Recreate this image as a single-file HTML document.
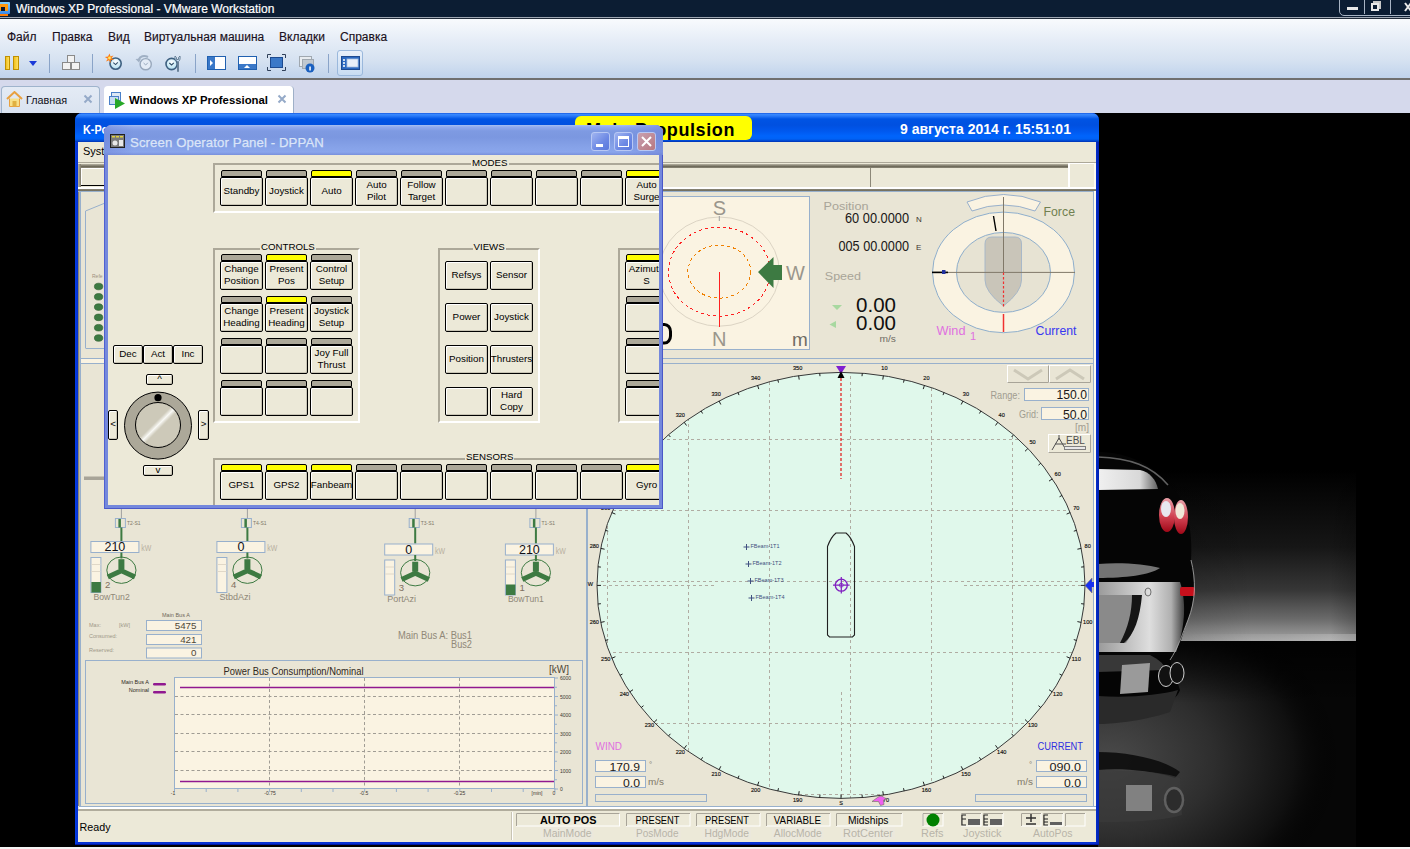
<!DOCTYPE html>
<html><head><meta charset="utf-8">
<style>
*{margin:0;padding:0;box-sizing:border-box}
html,body{width:1410px;height:849px;overflow:hidden;background:#000;font-family:"Liberation Sans",sans-serif}
.a{position:absolute}
#htitle{left:0;top:0;width:1410px;height:18px;background:#0c1d33;color:#fff;font-size:12px;line-height:17px;border-bottom:1px solid #b0b8c4}
#hmenu{left:0;top:18px;width:1410px;height:62px;background:linear-gradient(#c8d8f0 0,#f8fafd 1px,#f2f6fb 8px,#e6edf7 22px,#d6e2f1 42px,#c0d3ec 60px);border-bottom:2px solid #707070}
#htabs{left:0;top:80px;width:1410px;height:33px;background:#d5d9ec}
.mi{position:absolute;font-size:12px;color:#1a1020;-webkit-text-stroke:0.15px #1a1020}
.sep{position:absolute;top:53px;width:1px;height:19px;background:#8aa4c8}
#wall{left:1098px;top:113px;width:312px;height:736px;background:#000}
#gw{left:75px;top:113px;width:1024px;height:732px;background:linear-gradient(90deg,#0040e8,#0632d4 2px,#0632d4 1020px,#0020b0);border-radius:7px 7px 0 0;box-shadow:inset 0 -1px 0 #0018a0}
#gt{left:75px;top:113px;width:1024px;height:29px;border-radius:7px 7px 0 0;background:linear-gradient(#0a48d8 0,#3c8cff 1px,#2a7af8 3px,#0054e4 6px,#0050e0 12px,#0058ee 18px,#0064fc 23px,#0062f6 26px,#0044cc 28px,#0030b0 29px)}
#gc{left:78px;top:142px;width:1018px;height:700px;background:#ece9d8}
</style></head><body>
<div id="htitle" class="a">
  <svg class="a" style="left:0;top:0" width="12" height="17"><defs><linearGradient id="vmb" x1="0" y1="0" x2="0" y2="1"><stop offset="0" stop-color="#80d0ff"/><stop offset="1" stop-color="#3a88e8"/></linearGradient></defs><rect x="-1" y="2" width="11" height="12" rx="1" fill="url(#vmb)"/><rect x="-1" y="4" width="9" height="7" fill="#ff9a10"/><rect x="1" y="7" width="4" height="4" fill="#0a1830"/><rect x="-1" y="14" width="9" height="2" fill="#ff7a00"/></svg>
  <span class="a" style="left:16px;top:1px;-webkit-text-stroke:0.2px #fff">Windows XP Professional - VMware Workstation</span>
  <div class="a" style="left:1339px;top:-2px;width:80px;height:18px;border:1px solid #a8b4c4;border-radius:0 0 0 5px"></div>
  <div class="a" style="left:1364px;top:0;width:1px;height:14px;background:#a8b4c4"></div>
  <div class="a" style="left:1390px;top:0;width:1px;height:14px;background:#a8b4c4"></div>
  <div class="a" style="left:1347px;top:7px;width:11px;height:3px;background:#e8e8e8"></div>
  <div class="a" style="left:1373px;top:1px;width:8px;height:8px;border:2px solid #c8c8c8;border-left:none;border-bottom:none"></div><div class="a" style="left:1371px;top:3px;width:8px;height:8px;border:2px solid #e8e8e8;background:#0c1d33"></div>
  <svg class="a" style="left:1400px;top:2px" width="10" height="10"><path d="M5 1 L11 9 M11 1 L5 9" stroke="#e8e8e8" stroke-width="2"/></svg>
</div>
<div id="hmenu" class="a">
  <span class="mi" style="left:7px;top:12px">Файл</span>
  <span class="mi" style="left:52px;top:12px">Правка</span>
  <span class="mi" style="left:108px;top:12px">Вид</span>
  <span class="mi" style="left:144px;top:12px">Виртуальная машина</span>
  <span class="mi" style="left:279px;top:12px">Вкладки</span>
  <span class="mi" style="left:340px;top:12px">Справка</span>
  <!-- toolbar -->
  <div class="a" style="left:5px;top:38px;width:5px;height:14px;background:linear-gradient(90deg,#f0c020,#ffe060);border:1px solid #c09000"></div>
  <div class="a" style="left:13px;top:38px;width:6px;height:14px;background:linear-gradient(90deg,#f0c020,#ffe060);border:1px solid #c09000"></div>
  <div class="a" style="left:29px;top:43px;width:0;height:0;border-left:4px solid transparent;border-right:4px solid transparent;border-top:5px solid #1a3ad8"></div>
  <div class="sep" style="left:49px;top:36px"></div>
  <svg class="a" style="left:61px;top:36px" width="20" height="17"><rect x="6.5" y="1.5" width="7" height="7" fill="#f2f2f2" stroke="#8a8a8a"/><rect x="1.5" y="8.5" width="8" height="7" fill="#f2f2f2" stroke="#8a8a8a"/><rect x="10.5" y="8.5" width="8" height="7" fill="#f2f2f2" stroke="#8a8a8a"/></svg>
  <div class="sep" style="left:92px;top:36px"></div>
  <svg class="a" style="left:104px;top:35px" width="22" height="20"><defs><radialGradient id="clk" cx="0.5" cy="0.35" r="0.7"><stop offset="0" stop-color="#ffffff"/><stop offset="1" stop-color="#a8dcf0"/></radialGradient></defs><circle cx="11.6" cy="10.6" r="5.6" fill="url(#clk)" stroke="#3e6080" stroke-width="1.6"/><path d="M9.3 9.6 L11.6 11.6 L13.8 9.4" stroke="#30506a" stroke-width="1.1" fill="none"/><path d="M5.5 0.5 L6.5 3.5 L9.5 2.5 L7.5 5 L10 7 L6.8 6.8 L6.5 10 L5 7.2 L2 8.5 L3.8 5.8 L0.8 4 L4 3.6 Z" fill="#ff7a10"/><circle cx="5.5" cy="5" r="1.4" fill="#ffe860"/></svg>
  <svg class="a" style="left:134px;top:35px" width="22" height="20"><circle cx="11.7" cy="11.2" r="5.6" fill="#e4ecf6" stroke="#98a8bc" stroke-width="1.4"/><path d="M9.6 10 L11.7 12 L13.8 9.8" stroke="#98a8bc" stroke-width="1" fill="none"/><path d="M14 4 C10 2 6 3 4.5 7" stroke="#a0b0c4" stroke-width="2" fill="none"/><path d="M1.5 6 L5 9.5 L7 5.5 Z" fill="#a0b0c4"/></svg>
  <svg class="a" style="left:164px;top:35px" width="22" height="20"><circle cx="7.6" cy="11" r="5.6" fill="url(#clk)" stroke="#3e6080" stroke-width="1.6"/><path d="M5.3 10 L7.6 12 L9.8 9.8" stroke="#30506a" stroke-width="1.1" fill="none"/><path d="M13.5 18.5 L13.5 8.5 C11.5 8 10.5 6 11 3 L12.5 4.5 L12.5 6.5 L14.5 6.5 L14.5 4.5 L16 3 C16.5 6 15.5 8 14.5 8.5 L14.5 18.5 Z" fill="#c8e0f4" stroke="#607890" stroke-width="0.9"/></svg>
  <div class="sep" style="left:195px;top:36px"></div>
  <svg class="a" style="left:207px;top:38px" width="20" height="15"><rect x="0.5" y="0.5" width="18" height="13" fill="#fff" stroke="#2060b0"/><rect x="1" y="1" width="7" height="12" fill="#3a78c8"/><path d="M3 4 L6 7 L3 10 Z" fill="#fff"/></svg>
  <svg class="a" style="left:238px;top:38px" width="20" height="15"><rect x="0.5" y="0.5" width="18" height="13" fill="#fff" stroke="#2060b0"/><rect x="1" y="8" width="17" height="5" fill="#3a78c8"/><path d="M6 12 L9 9 L12 12 Z" fill="#fff"/></svg>
  <svg class="a" style="left:267px;top:36px" width="20" height="18"><rect x="3.5" y="3.5" width="12" height="10" fill="#3a78c8" stroke="#1c4a90"/><path d="M0.5 4 V0.5 H4 M15 0.5 H18.5 V4 M18.5 13 V16.5 H15 M4 16.5 H0.5 V13" stroke="#30405a" fill="none"/></svg>
  <svg class="a" style="left:298px;top:37px" width="20" height="18"><rect x="1.5" y="1.5" width="12" height="10" fill="#e8ecf0" stroke="#a0a8b0"/><rect x="4.5" y="4.5" width="11" height="9" fill="#c0c8d0" stroke="#a0a8b0"/><circle cx="12" cy="13" r="4.5" fill="#1a60c0"/><rect x="11.3" y="11.5" width="1.5" height="4" fill="#fff"/></svg>
  <div class="sep" style="left:328px;top:36px"></div>
  <div class="a" style="left:337px;top:32px;width:26px;height:26px;border:1px solid #9ab8dc;border-radius:3px;background:linear-gradient(#e8f0fa,#c8dcf2)"></div>
  <svg class="a" style="left:341px;top:38px" width="20" height="15"><rect x="0.5" y="0.5" width="18" height="13" fill="#2a68c0" stroke="#1c4a90"/><rect x="6" y="3" width="11" height="8" fill="#e8f0fa" stroke="#a8c0e0" stroke-width="0.8"/><rect x="2" y="3" width="2" height="2" fill="#cde"/><rect x="2" y="6" width="2" height="2" fill="#cde"/><rect x="2" y="9" width="2" height="2" fill="#cde"/></svg>
</div>
<div class="a" style="left:0;top:17px;width:1410px;height:1px;background:#a0a8b4"></div><div class="a" style="left:0;top:18px;width:1410px;height:1px;background:#202a38"></div>
<div id="htabs" class="a">
  <div class="a" style="left:1px;top:6px;width:99px;height:27px;background:linear-gradient(#e4ebf5,#dae3f0);border:1px solid #9fb4cc;border-bottom:none;border-radius:4px 4px 0 0"></div>
  <svg class="a" style="left:6px;top:11px" width="17" height="17"><path d="M1 8 L8.5 1 L16 8" stroke="#e8a040" stroke-width="2" fill="none"/><path d="M3.5 7.5 V15.5 H13.5 V7.5" fill="#f8e088" stroke="#e8a040"/><rect x="6.5" y="10" width="4" height="5.5" fill="#e0b040"/></svg>
  <div class="a" style="left:104px;top:6px;width:190px;height:27px;background:#fff;border-radius:4px 4px 0 0;border-right:1px solid #9fb0c8"></div>
  <svg class="a" style="left:109px;top:12px" width="17" height="17"><rect x="2.5" y="0.5" width="9" height="8" fill="#dde8f4" stroke="#4a80c8"/><rect x="0.5" y="4.5" width="9" height="8" fill="#c8dcf0" stroke="#4a80c8"/><path d="M6 6 L16 11.5 L6 17 Z" fill="#28a828"/></svg>
  <svg class="a" style="left:0;top:0" width="300" height="33" font-family="Liberation Sans">
    <text x="26" y="23.5" font-size="11.5" fill="#101018" textLength="41.2" lengthAdjust="spacingAndGlyphs">Главная</text>
    <path d="M84.5 15.5 L91.5 22.5 M91.5 15.5 L84.5 22.5" stroke="#95aac8" stroke-width="2"/>
    <text x="129" y="23.5" font-size="11.8" font-weight="bold" fill="#000" textLength="139" lengthAdjust="spacingAndGlyphs">Windows XP Professional</text>
    <path d="M278.5 15.5 L285.5 22.5 M285.5 15.5 L278.5 22.5" stroke="#95aac8" stroke-width="2"/>
  </svg>
</div>
<div id="wall" class="a">
<svg width="312" height="736" viewBox="1098 113 312 736" style="position:absolute;left:0;top:0">
 <defs>
  <linearGradient id="glowU" gradientUnits="userSpaceOnUse" x1="0" y1="470" x2="0" y2="641">
   <stop offset="0" stop-color="#000"/><stop offset="0.45" stop-color="#161616"/><stop offset="0.7" stop-color="#363636"/><stop offset="0.87" stop-color="#6a6a6a"/><stop offset="1" stop-color="#a4a4a4"/>
  </linearGradient>
  <linearGradient id="glowUx" gradientUnits="userSpaceOnUse" x1="1098" y1="0" x2="1356" y2="0">
   <stop offset="0" stop-color="#000" stop-opacity="0.25"/><stop offset="0.6" stop-color="#000" stop-opacity="0"/><stop offset="0.9" stop-color="#000" stop-opacity="0"/><stop offset="1" stop-color="#000" stop-opacity="0.2"/>
  </linearGradient>
  <radialGradient id="glowD" gradientUnits="userSpaceOnUse" cx="1110" cy="760" r="1" gradientTransform="translate(1110 760) scale(230 170) translate(-1110 -760)">
   <stop offset="0" stop-color="#4a4a4a"/><stop offset="0.45" stop-color="#2e2e2e"/><stop offset="0.8" stop-color="#101010"/><stop offset="1" stop-color="#000" stop-opacity="0"/>
  </radialGradient>
  <linearGradient id="horD" x1="0" x2="0" y1="641" y2="703" gradientUnits="userSpaceOnUse"><stop offset="0" stop-color="#000" stop-opacity="0.8"/><stop offset="1" stop-color="#000" stop-opacity="0"/></linearGradient>
  <linearGradient id="streak" x1="1180" x2="1356" y1="0" y2="0" gradientUnits="userSpaceOnUse">
   <stop offset="0" stop-color="#fff" stop-opacity="0"/><stop offset="0.6" stop-color="#fff" stop-opacity="0.35"/><stop offset="1" stop-color="#fff" stop-opacity="0.8"/>
  </linearGradient>
  <linearGradient id="bump" x1="0" x2="1" y1="0" y2="0">
   <stop offset="0" stop-color="#9a9a9a"/><stop offset="0.6" stop-color="#dedede"/><stop offset="0.85" stop-color="#b0b0b0"/><stop offset="1" stop-color="#404040"/>
  </linearGradient>
  <linearGradient id="win" x1="0" x2="1" y1="0" y2="0">
   <stop offset="0" stop-color="#f0f0f0"/><stop offset="0.7" stop-color="#d8d8d8"/><stop offset="1" stop-color="#606060"/>
  </linearGradient>
  <linearGradient id="tl" x1="0" x2="0" y1="0" y2="1">
   <stop offset="0" stop-color="#e8a0a8"/><stop offset="0.55" stop-color="#d04050"/><stop offset="1" stop-color="#a00818"/>
  </linearGradient>
 </defs>
 <rect x="1098" y="113" width="258" height="528" fill="url(#glowU)"/><rect x="1098" y="450" width="258" height="191" fill="url(#glowUx)"/>
 <rect x="1098" y="641" width="258" height="208" fill="#060606"/>
 <rect x="1098" y="641" width="258" height="208" fill="url(#glowD)"/><rect x="1098" y="641" width="258" height="62" fill="url(#horD)"/>
 <rect x="1190" y="634" width="166" height="7" fill="url(#streak)" opacity="0.3"/>
 <!-- car body -->
 <path d="M1098 452 C1125 452 1150 462 1170 485 C1185 500 1193 525 1191 560 C1195 575 1196 600 1188 620 C1182 635 1180 650 1170 660 L1180 690 C1175 705 1150 712 1098 715 Z" fill="#050505"/>
 <path d="M1098 457 C1130 458 1152 466 1168 485" fill="none" stroke="#8a8a8a" stroke-width="1.5" opacity="0.7"/>
 <path d="M1098 469 L1140 470 C1150 472 1156 480 1158 489 L1098 490 Z" fill="url(#win)"/>
 <path d="M1098 564 C1120 562 1145 564 1160 568 C1150 575 1125 578 1098 578 Z" fill="#909090" opacity="0.8"/>
 <path d="M1098 582 L1180 582 C1186 600 1186 625 1176 652 L1098 652 Z" fill="url(#bump)"/>
 <path d="M1098 595 L1140 595 C1138 615 1134 632 1126 643 L1098 643 Z" fill="#8a8a8a"/>
 <path d="M1132 595 L1142 595 C1140 618 1134 635 1124 643 L1120 643 C1128 628 1132 612 1132 595 Z" fill="#151515"/>
 <ellipse cx="1148" cy="592" rx="3" ry="4" fill="none" stroke="#707070"/>
 <rect x="1180" y="587" width="15" height="9" rx="2" fill="#c8101c"/>
 <path d="M1191 560 C1196 580 1196 600 1188 620 C1182 635 1178 648 1170 660" fill="none" stroke="#b0b0b0" stroke-width="0.8"/>
 <ellipse cx="1167" cy="515" rx="8" ry="17" fill="url(#tl)"/>
 <ellipse cx="1166" cy="509" rx="5" ry="8" fill="#e8e8f0"/>
 <ellipse cx="1181" cy="517" rx="7" ry="17" fill="url(#tl)"/>
 <ellipse cx="1180" cy="511" rx="4.5" ry="8" fill="#f0e8d8"/>
 <path d="M1098 655 L1150 655 C1160 660 1165 665 1165 670 L1098 672 Z" fill="#383838"/>
 <path d="M1122 665 L1150 663 L1148 692 L1120 694 Z" fill="#9a9a9a"/>
 <path d="M1098 696 C1130 698 1160 695 1178 690 L1170 712 C1140 722 1110 724 1098 724 Z" fill="#2a2a2a"/>
 <ellipse cx="1166" cy="676" rx="7.5" ry="10.5" fill="#111" stroke="#d0d0d0" stroke-width="1"/>
 <ellipse cx="1177" cy="673" rx="7" ry="10.5" fill="#111" stroke="#d0d0d0" stroke-width="1"/>
 <!-- reflection -->
 <path d="M1098 752 C1130 752 1165 760 1180 772 L1175 778 C1150 770 1120 768 1098 770 Z" fill="#0c0c0c" opacity="0.9"/>
 <path d="M1098 770 C1130 770 1165 772 1180 778 L1182 815 C1160 822 1120 822 1098 822 Z" fill="#3a3a3a" opacity="0.7"/>
 <rect x="1126" y="785" width="26" height="26" fill="#9a9a9a" opacity="0.75"/>
 <ellipse cx="1174" cy="800" rx="9" ry="12" fill="#2a2a2a" stroke="#6a6a6a" stroke-width="2.5" opacity="0.8"/>
</svg>
</div>
<div id="gw" class="a"></div>
<div id="gt" class="a">
  <span class="a" style="left:8px;top:9px;font-size:13.5px;font-weight:bold;color:#fff;transform:scaleX(0.8);transform-origin:0 0;word-spacing:4px">K-Pos OS Operator Title Station 00</span>
  <div class="a" style="left:500px;top:3px;width:177px;height:24px;background:#ffff00;border-radius:6px"></div>
  <span class="a" style="left:511px;top:7px;font-size:18px;letter-spacing:0.6px;font-weight:bold;color:#000">Main Propulsion</span>
  <span class="a" style="left:825px;top:8px;font-size:14px;font-weight:bold;color:#fff">9 августа 2014 г. 15:51:01</span>
</div>
<div id="gc" class="a">
  <span class="a" style="left:5px;top:3px;font-size:11px;color:#000">System</span>
  <div class="a" style="left:0;top:20px;width:1018px;height:1px;background:#aca899"></div>
  <div class="a" style="left:0;top:22px;width:991px;height:4px;background:linear-gradient(#b8b4a4,#6e6a5a 60%,#8c8878)"></div>
  <div class="a" style="left:0;top:22px;width:3px;height:24px;background:linear-gradient(90deg,#b8b4a4,#7e7a6a)"></div>
  <div class="a" style="left:3px;top:26px;width:30px;height:1px;background:#fff"></div>
  <div class="a" style="left:3px;top:26px;width:1px;height:17px;background:#fff"></div>
  <div class="a" style="left:3px;top:43px;width:30px;height:1px;background:#000"></div>
  <div class="a" style="left:990px;top:21px;width:2px;height:25px;background:#fff"></div>
  <div class="a" style="left:992px;top:21px;width:26px;height:1px;background:#fff"></div>
  <div class="a" style="left:1016px;top:21px;width:2px;height:679px;background:#fdfaf0"></div>
  <div class="a" style="left:792px;top:26px;width:1px;height:20px;background:#8c8878"></div>
  <div class="a" style="left:0;top:45px;width:1018px;height:2px;background:#fff"></div>
  <div class="a" style="left:0;top:47px;width:1018px;height:2px;background:linear-gradient(#8c8878,#6e6a5a)"></div>
  <div class="a" style="left:0;top:49px;width:1016px;height:651px;background:#e9e5d5;border-top:1px solid #98b0cc"></div>
</div>
<svg class="a" style="left:0;top:0" width="1410" height="849" font-family="Liberation Sans"><rect x="78" y="192" width="1.5" height="614" fill="#8a8676"/><rect x="80" y="192" width="1" height="615" fill="#98b0cc"/><rect x="586" y="192" width="2" height="615" fill="#98b0cc"/><rect x="1093" y="192" width="1" height="615" fill="#98b0cc"/><rect x="588" y="358" width="505" height="1" fill="#98b0cc"/><rect x="588" y="363" width="505" height="1" fill="#98b0cc"/><rect x="79" y="806" width="1017" height="1" fill="#98b0cc"/><rect x="79" y="807" width="1017" height="2" fill="#fff"/><path d="M85.5 348 V211 L110 201" fill="none" stroke="#98b0cc"/><path d="M85.5 348.5 H110" fill="none" stroke="#98b0cc"/><rect x="80.5" y="358.5" width="30" height="5" fill="#faf3e2" stroke="#98b0cc"/><text x="92" y="278" font-size="5" fill="#a09080">Refe</text><ellipse cx="98.6" cy="286.5" rx="4.2" ry="3.3" fill="#3d7a42" stroke="#2a5a2a" stroke-width="0.6"/><ellipse cx="98.6" cy="296.8" rx="4.2" ry="3.3" fill="#3d7a42" stroke="#2a5a2a" stroke-width="0.6"/><ellipse cx="98.6" cy="307.1" rx="4.2" ry="3.3" fill="#3d7a42" stroke="#2a5a2a" stroke-width="0.6"/><ellipse cx="98.6" cy="317.4" rx="4.2" ry="3.3" fill="#3d7a42" stroke="#2a5a2a" stroke-width="0.6"/><ellipse cx="98.6" cy="327.7" rx="4.2" ry="3.3" fill="#3d7a42" stroke="#2a5a2a" stroke-width="0.6"/><ellipse cx="98.6" cy="338.0" rx="4.2" ry="3.3" fill="#3d7a42" stroke="#2a5a2a" stroke-width="0.6"/><rect x="84" y="476.5" width="22" height="3.5" fill="#a8a498"/><rect x="120.9" y="505" width="1" height="13" fill="#a0a0a0"/><rect x="115.4" y="518.5" width="10" height="9" fill="none" stroke="#98b0cc"/><rect x="118.4" y="519" width="2.5" height="8.5" fill="#3d7a42"/><text x="126.9" y="525" font-size="5" fill="#807868">T2-S1</text><rect x="120.4" y="527.5" width="2" height="13.5" fill="#3d7a42"/><rect x="90.9" y="541.5" width="48" height="11" fill="#faf3e2" stroke="#98b0cc"/><text x="114.9" y="551.3" font-size="12.5" text-anchor="middle" fill="#101018">210</text><text x="141.2" y="551" font-size="8.5" fill="#b8b0a0" textLength="10" lengthAdjust="spacingAndGlyphs" >kW</text><rect x="120.4" y="552.5" width="2" height="6" fill="#3d7a42"/><ellipse cx="121.4" cy="570.2" rx="14.6" ry="13.2" fill="none" stroke="#3d7a42" stroke-width="1"/><rect x="118.4" y="559.2" width="6" height="10" fill="#3d7a42"/><path d="M107.8 576.9 L121.4 570.7 L135 576.9" fill="none" stroke="#3d7a42" stroke-width="5"/><rect x="90.9" y="557.5" width="10" height="35" fill="#faf3e2" stroke="#98b0cc"/><line x1="91.4" y1="564.5" x2="100.4" y2="564.5" stroke="#e0d8c8"/><line x1="91.4" y1="571.5" x2="100.4" y2="571.5" stroke="#e0d8c8"/><rect x="91.4" y="582" width="9.5" height="10.5" fill="#3d7a42"/><text x="104.9" y="588" font-size="9.6" fill="#807060">2</text><text x="93.4" y="599.5" font-size="9.6" fill="#908878" textLength="36.4" lengthAdjust="spacingAndGlyphs" >BowTun2</text><rect x="246.9" y="505" width="1" height="13" fill="#a0a0a0"/><rect x="241.4" y="518.5" width="10" height="9" fill="none" stroke="#98b0cc"/><rect x="244.4" y="519" width="2.5" height="8.5" fill="#3d7a42"/><text x="252.9" y="525" font-size="5" fill="#807868">T4-S1</text><rect x="246.4" y="527.5" width="2" height="13.5" fill="#3d7a42"/><rect x="216.9" y="541.5" width="48" height="11" fill="#faf3e2" stroke="#98b0cc"/><text x="240.9" y="551.3" font-size="12.5" text-anchor="middle" fill="#101018">0</text><text x="267.2" y="551" font-size="8.5" fill="#b8b0a0" textLength="10" lengthAdjust="spacingAndGlyphs" >kW</text><rect x="246.4" y="552.5" width="2" height="6" fill="#3d7a42"/><ellipse cx="247.4" cy="570.2" rx="14.6" ry="13.2" fill="none" stroke="#3d7a42" stroke-width="1"/><rect x="244.4" y="559.2" width="6" height="10" fill="#3d7a42"/><path d="M233.8 576.9 L247.4 570.7 L261 576.9" fill="none" stroke="#3d7a42" stroke-width="5"/><rect x="216.9" y="557.5" width="10" height="35" fill="#faf3e2" stroke="#98b0cc"/><line x1="217.4" y1="564.5" x2="226.4" y2="564.5" stroke="#e0d8c8"/><line x1="217.4" y1="571.5" x2="226.4" y2="571.5" stroke="#e0d8c8"/><text x="230.9" y="588" font-size="9.6" fill="#807060">4</text><text x="219.4" y="599.5" font-size="9.6" fill="#908878" textLength="31.1" lengthAdjust="spacingAndGlyphs" >StbdAzi</text><rect x="414.7" y="505" width="1" height="13" fill="#a0a0a0"/><rect x="409.2" y="518.5" width="10" height="9" fill="none" stroke="#98b0cc"/><rect x="412.2" y="519" width="2.5" height="8.5" fill="#3d7a42"/><text x="420.7" y="525" font-size="5" fill="#807868">T3-S1</text><rect x="414.2" y="527.5" width="2" height="16.0" fill="#3d7a42"/><rect x="384.7" y="544.0" width="48" height="11" fill="#faf3e2" stroke="#98b0cc"/><text x="408.7" y="553.8" font-size="12.5" text-anchor="middle" fill="#101018">0</text><text x="435" y="553.5" font-size="8.5" fill="#b8b0a0" textLength="10" lengthAdjust="spacingAndGlyphs" >kW</text><rect x="414.2" y="555.0" width="2" height="6" fill="#3d7a42"/><ellipse cx="415.2" cy="572.7" rx="14.6" ry="13.2" fill="none" stroke="#3d7a42" stroke-width="1"/><rect x="412.2" y="561.7" width="6" height="10" fill="#3d7a42"/><path d="M401.6 579.4 L415.2 573.2 L428.8 579.4" fill="none" stroke="#3d7a42" stroke-width="5"/><rect x="384.7" y="560.0" width="10" height="35" fill="#faf3e2" stroke="#98b0cc"/><line x1="385.2" y1="567.0" x2="394.2" y2="567.0" stroke="#e0d8c8"/><line x1="385.2" y1="574.0" x2="394.2" y2="574.0" stroke="#e0d8c8"/><text x="398.7" y="590.5" font-size="9.6" fill="#807060">3</text><text x="387.2" y="602" font-size="9.6" fill="#908878" textLength="28.9" lengthAdjust="spacingAndGlyphs" >PortAzi</text><rect x="535.4" y="505" width="1" height="13" fill="#a0a0a0"/><rect x="529.9" y="518.5" width="10" height="9" fill="none" stroke="#98b0cc"/><rect x="532.9" y="519" width="2.5" height="8.5" fill="#3d7a42"/><text x="541.4" y="525" font-size="5" fill="#807868">T1-S1</text><rect x="534.9" y="527.5" width="2" height="16.0" fill="#3d7a42"/><rect x="505.4" y="544.0" width="48" height="11" fill="#faf3e2" stroke="#98b0cc"/><text x="529.4" y="553.8" font-size="12.5" text-anchor="middle" fill="#101018">210</text><text x="555.7" y="553.5" font-size="8.5" fill="#b8b0a0" textLength="10" lengthAdjust="spacingAndGlyphs" >kW</text><rect x="534.9" y="555.0" width="2" height="6" fill="#3d7a42"/><ellipse cx="535.9" cy="572.7" rx="14.6" ry="13.2" fill="none" stroke="#3d7a42" stroke-width="1"/><rect x="532.9" y="561.7" width="6" height="10" fill="#3d7a42"/><path d="M522.3 579.4 L535.9 573.2 L549.5 579.4" fill="none" stroke="#3d7a42" stroke-width="5"/><rect x="505.4" y="560.0" width="10" height="35" fill="#faf3e2" stroke="#98b0cc"/><line x1="505.9" y1="567.0" x2="514.9" y2="567.0" stroke="#e0d8c8"/><line x1="505.9" y1="574.0" x2="514.9" y2="574.0" stroke="#e0d8c8"/><rect x="505.9" y="584.5" width="9.5" height="10.5" fill="#3d7a42"/><text x="519.4" y="590.5" font-size="9.6" fill="#807060">1</text><text x="507.9" y="602" font-size="9.6" fill="#908878" textLength="35.9" lengthAdjust="spacingAndGlyphs" >BowTun1</text><text x="162" y="616.5" font-size="5.5" fill="#706858">Main Bus A</text><text x="89" y="626.5" font-size="5.5" fill="#a09888">Max:</text><text x="119" y="626.5" font-size="5.5" fill="#a09888">[kW]</text><text x="89" y="637.5" font-size="5.5" fill="#a09888">Consumed:</text><text x="89" y="651.5" font-size="5.5" fill="#a09888">Reserved:</text><rect x="146.5" y="620.5" width="55" height="10" fill="#faf3e2" stroke="#98b0cc"/><text x="196.5" y="628.5" font-size="9.8" text-anchor="end" fill="#504838">5475</text><rect x="146.5" y="634.5" width="55" height="10" fill="#faf3e2" stroke="#98b0cc"/><text x="196.5" y="642.5" font-size="9.8" text-anchor="end" fill="#504838">421</text><rect x="146.5" y="648" width="55" height="10" fill="#faf3e2" stroke="#98b0cc"/><text x="196.5" y="656" font-size="9.8" text-anchor="end" fill="#504838">0</text><text x="398" y="639" font-size="10" fill="#908878" textLength="74" lengthAdjust="spacingAndGlyphs" xml:space="preserve">Main Bus A: Bus1</text><text x="451" y="648" font-size="10" fill="#908878" textLength="21" lengthAdjust="spacingAndGlyphs" >Bus2</text><rect x="85.5" y="660.5" width="497" height="143" fill="none" stroke="#98b0cc"/><text x="223.5" y="674.6" font-size="10.5" fill="#302820" textLength="140" lengthAdjust="spacingAndGlyphs" >Power Bus Consumption/Nominal</text><text x="549" y="673" font-size="11" fill="#504838" textLength="20" lengthAdjust="spacingAndGlyphs" >[kW]</text><rect x="174.5" y="677.5" width="380" height="111" fill="#faf3e2" stroke="#98b0cc"/><line x1="175" y1="696.5" x2="554" y2="696.5" stroke="#a09c94" stroke-dasharray="3,2.5"/><line x1="175" y1="714.5" x2="554" y2="714.5" stroke="#a09c94" stroke-dasharray="3,2.5"/><line x1="175" y1="733.5" x2="554" y2="733.5" stroke="#a09c94" stroke-dasharray="3,2.5"/><line x1="175" y1="751.5" x2="554" y2="751.5" stroke="#a09c94" stroke-dasharray="3,2.5"/><line x1="175" y1="770.5" x2="554" y2="770.5" stroke="#a09c94" stroke-dasharray="3,2.5"/><line x1="269.5" y1="678" x2="269.5" y2="788" stroke="#a09c94" stroke-dasharray="3,2.5"/><line x1="364.5" y1="678" x2="364.5" y2="788" stroke="#a09c94" stroke-dasharray="3,2.5"/><line x1="459.5" y1="678" x2="459.5" y2="788" stroke="#a09c94" stroke-dasharray="3,2.5"/><line x1="180" y1="687.5" x2="554" y2="687.5" stroke="#901890" stroke-width="1.4"/><line x1="180" y1="781.5" x2="554" y2="781.5" stroke="#901890" stroke-width="1.4"/><text x="149" y="684.3" font-size="5.5" text-anchor="end" fill="#302820">Main Bus A</text><text x="149" y="691.5" font-size="5.5" text-anchor="end" fill="#302820">Nominal</text><rect x="153" y="683" width="13" height="2.6" rx="1.3" fill="#901890"/><rect x="153" y="691" width="13" height="2.6" rx="1.3" fill="#901890"/><text x="560" y="680.0" font-size="5" fill="#403830">6000</text><line x1="554" y1="678.0" x2="558" y2="678.0" stroke="#98b0cc"/><line x1="554" y1="687.25" x2="557" y2="687.25" stroke="#98b0cc"/><text x="560" y="698.5" font-size="5" fill="#403830">5000</text><line x1="554" y1="696.5" x2="558" y2="696.5" stroke="#98b0cc"/><line x1="554" y1="705.75" x2="557" y2="705.75" stroke="#98b0cc"/><text x="560" y="717.0" font-size="5" fill="#403830">4000</text><line x1="554" y1="715.0" x2="558" y2="715.0" stroke="#98b0cc"/><line x1="554" y1="724.25" x2="557" y2="724.25" stroke="#98b0cc"/><text x="560" y="735.5" font-size="5" fill="#403830">3000</text><line x1="554" y1="733.5" x2="558" y2="733.5" stroke="#98b0cc"/><line x1="554" y1="742.75" x2="557" y2="742.75" stroke="#98b0cc"/><text x="560" y="754.0" font-size="5" fill="#403830">2000</text><line x1="554" y1="752.0" x2="558" y2="752.0" stroke="#98b0cc"/><line x1="554" y1="761.25" x2="557" y2="761.25" stroke="#98b0cc"/><text x="560" y="772.5" font-size="5" fill="#403830">1000</text><line x1="554" y1="770.5" x2="558" y2="770.5" stroke="#98b0cc"/><line x1="554" y1="779.75" x2="557" y2="779.75" stroke="#98b0cc"/><text x="560" y="791.0" font-size="5" fill="#403830">0</text><line x1="554" y1="789.0" x2="558" y2="789.0" stroke="#98b0cc"/><line x1="174.5" y1="788" x2="174.5" y2="792" stroke="#98b0cc"/><line x1="206.2" y1="788" x2="206.2" y2="792" stroke="#98b0cc"/><line x1="237.9" y1="788" x2="237.9" y2="792" stroke="#98b0cc"/><line x1="269.6" y1="788" x2="269.6" y2="792" stroke="#98b0cc"/><line x1="301.3" y1="788" x2="301.3" y2="792" stroke="#98b0cc"/><line x1="333" y1="788" x2="333" y2="792" stroke="#98b0cc"/><line x1="364.7" y1="788" x2="364.7" y2="792" stroke="#98b0cc"/><line x1="396.4" y1="788" x2="396.4" y2="792" stroke="#98b0cc"/><line x1="428.1" y1="788" x2="428.1" y2="792" stroke="#98b0cc"/><line x1="459.8" y1="788" x2="459.8" y2="792" stroke="#98b0cc"/><line x1="491.5" y1="788" x2="491.5" y2="792" stroke="#98b0cc"/><line x1="523.2" y1="788" x2="523.2" y2="792" stroke="#98b0cc"/><line x1="554.9" y1="788" x2="554.9" y2="792" stroke="#98b0cc"/><text x="173" y="795" font-size="5" text-anchor="middle" fill="#403830">-1</text><text x="270" y="795" font-size="5" text-anchor="middle" fill="#403830">-0.75</text><text x="364" y="795" font-size="5" text-anchor="middle" fill="#403830">-0.5</text><text x="459.5" y="795" font-size="5" text-anchor="middle" fill="#403830">-0.25</text><text x="537" y="795" font-size="5" text-anchor="middle" fill="#403830">[min]</text><text x="554" y="795" font-size="5" text-anchor="middle" fill="#403830">0</text><rect x="600.5" y="196.5" width="209" height="153" fill="#faf3e2" stroke="#98b0cc"/><ellipse cx="719.3" cy="271.6" rx="60" ry="54.6" fill="none" stroke="#dcd4c4"/><ellipse cx="719.3" cy="271.6" rx="50.8" ry="44.5" fill="none" stroke="#ff2020" stroke-dasharray="3,3" shape-rendering="crispEdges"/><ellipse cx="719.3" cy="271.6" rx="31.4" ry="26.5" fill="none" stroke="#f08000" stroke-dasharray="3,3" shape-rendering="crispEdges"/><line x1="719.5" y1="271.6" x2="719.5" y2="327" stroke="#ff2020" stroke-width="1" shape-rendering="crispEdges"/><line x1="719.3" y1="216" x2="719.3" y2="221" stroke="#a0a0a0"/><text x="719.3" y="215" font-size="20" text-anchor="middle" fill="#9a968c">S</text><text x="719.3" y="346" font-size="20" text-anchor="middle" fill="#9a968c">N</text><text x="786" y="280" font-size="20" fill="#9a968c">W</text><text x="792" y="346" font-size="19" fill="#706c64">m</text><rect x="650.5" y="324.5" width="20" height="18.5" rx="6" ry="7" fill="none" stroke="#000" stroke-width="3"/><path d="M758 272 L773.5 257 L773.5 265 L782 265 L782 280 L773.5 280 L773.5 288 Z" fill="#3d7a42"/><text x="823.5" y="209.8" font-size="11.6" fill="#a8a498" textLength="45" lengthAdjust="spacingAndGlyphs" >Position</text><text x="845" y="223" font-size="13.8" fill="#201818" textLength="64" lengthAdjust="spacingAndGlyphs" >60 00.0000</text><text x="916" y="222" font-size="8" fill="#403830">N</text><text x="838.5" y="250.5" font-size="13.8" fill="#201818" textLength="70.5" lengthAdjust="spacingAndGlyphs" >005 00.0000</text><text x="916" y="250" font-size="8" fill="#403830">E</text><text x="824.8" y="280" font-size="11.8" fill="#a8a498" textLength="36.2" lengthAdjust="spacingAndGlyphs" >Speed</text><path d="M832 305 L842 305 L837 310 Z" fill="#a8d8a0"/><path d="M836 321 L836 328 L829.5 324.5 Z" fill="#a8d8a0"/><text x="856" y="311.5" font-size="19.5" fill="#101010" textLength="40" lengthAdjust="spacingAndGlyphs" >0.00</text><text x="856" y="330.3" font-size="19.5" fill="#101010" textLength="40" lengthAdjust="spacingAndGlyphs" >0.00</text><text x="879.5" y="342" font-size="9.5" fill="#706c64" textLength="16.5" lengthAdjust="spacingAndGlyphs" >m/s</text><path d="M967 202 Q1003.5 187 1040.5 202 L1035 211 Q1003.5 199 972 211 Z" fill="#faf3e2" stroke="#98b0cc"/><ellipse cx="1003.5" cy="272.4" rx="71" ry="60.3" fill="#faf3e2" stroke="#8eaecc"/><ellipse cx="1003.5" cy="272.4" rx="47" ry="40" fill="#e7e3d3" stroke="#8eaecc"/><path d="M985 244 Q985 237 992 237 L1015 237 Q1021.5 237 1021.5 244 L1021.5 280 Q1021.5 292 1003.5 306 Q985 292 985 280 Z" fill="#c9c5b9" stroke="#a8b8c8"/><line x1="1003.5" y1="197" x2="1003.5" y2="272.4" stroke="#807868"/><line x1="932" y1="272.4" x2="1075" y2="272.4" stroke="#807868"/><line x1="1003.5" y1="272.4" x2="1003.5" y2="307" stroke="#f03030" stroke-width="1.2" stroke-dasharray="2.5,2"/><line x1="1003.5" y1="314" x2="1003.5" y2="332" stroke="#f03030" stroke-width="1.5"/><line x1="932" y1="272.4" x2="948" y2="272.4" stroke="#000" stroke-width="1.6"/><rect x="942" y="270" width="3.5" height="4" fill="#2030a0"/><line x1="993.5" y1="216" x2="996" y2="231" stroke="#000" stroke-width="1.4"/><text x="1043.5" y="216" font-size="12" fill="#708050" textLength="31.5" lengthAdjust="spacingAndGlyphs" >Force</text><text x="936.5" y="335" font-size="12" fill="#e070e0" textLength="29" lengthAdjust="spacingAndGlyphs" >Wind</text><text x="970" y="340" font-size="11" fill="#e070e0">1</text><text x="1035.5" y="335" font-size="12" fill="#3838f0" textLength="41" lengthAdjust="spacingAndGlyphs" >Current</text><defs><clipPath id="rclip"><ellipse cx="841" cy="585.4" rx="244" ry="213"/></clipPath></defs><ellipse cx="841" cy="585.4" rx="244" ry="213" fill="#e0f8eb"/><g clip-path="url(#rclip)" stroke="#b0aca2" stroke-dasharray="3,3" fill="none"><line x1="607.5" y1="370" x2="607.5" y2="800"/><line x1="688.5" y1="370" x2="688.5" y2="800"/><line x1="769.5" y1="370" x2="769.5" y2="800"/><line x1="850.5" y1="370" x2="850.5" y2="800"/><line x1="931.5" y1="370" x2="931.5" y2="800"/><line x1="1012.5" y1="370" x2="1012.5" y2="800"/><line x1="595" y1="439.5" x2="1087" y2="439.5"/><line x1="595" y1="510.5" x2="1087" y2="510.5"/><line x1="595" y1="581.5" x2="1087" y2="581.5"/><line x1="595" y1="652.5" x2="1087" y2="652.5"/><line x1="595" y1="723.5" x2="1087" y2="723.5"/><line x1="595" y1="794.5" x2="1087" y2="794.5"/><line x1="597" y1="585.5" x2="717" y2="585.5"/><line x1="964" y1="585.5" x2="1085" y2="585.5"/><line x1="841.5" y1="692" x2="841.5" y2="798"/></g><ellipse cx="841" cy="585.4" rx="244" ry="213" fill="none" stroke="#383838" stroke-width="1"/><path d="M841 372.4L841 376.4M862.3 373.2L862 376.2M883.4 375.6L882.8 379.6M904.2 379.7L903.5 382.6M924.5 385.2L923.2 389.1M944.1 392.4L943 395.1M963 400.9L961.2 404.5M981 410.9L979.4 413.5M997.8 422.2L995.5 425.5M1013.5 434.8L1011.6 437M1027.9 448.5L1025 451.3M1040.9 463.2L1038.5 465.1M1052.3 478.9L1049 481.1M1062.1 495.4L1059.5 496.8M1070.3 512.5L1066.6 514.1M1076.7 530.3L1073.8 531.2M1081.3 548.4L1077.4 549.2M1084.1 566.8L1081.1 567.1M1085 585.4L1081 585.4M1084.1 604L1081.1 603.7M1081.3 622.4L1077.4 621.6M1076.7 640.5L1073.8 639.6M1070.3 658.3L1066.6 656.7M1062.1 675.4L1059.5 674M1052.3 691.9L1049 689.7M1040.9 707.6L1038.5 705.7M1027.9 722.3L1025 719.5M1013.5 736L1011.6 733.8M997.8 748.6L995.5 745.3M981 759.9L979.4 757.3M963 769.9L961.2 766.3M944.1 778.4L943 775.7M924.5 785.6L923.2 781.7M904.2 791.1L903.5 788.2M883.4 795.2L882.8 791.2M862.3 797.6L862 794.6M841 798.4L841 794.4M819.7 797.6L820 794.6M798.6 795.2L799.2 791.2M777.8 791.1L778.5 788.2M757.5 785.6L758.8 781.7M737.9 778.4L739 775.7M719 769.9L720.8 766.3M701 759.9L702.6 757.3M684.2 748.6L686.5 745.3M668.5 736L670.4 733.8M654.1 722.3L657 719.5M641.1 707.6L643.5 705.7M629.7 691.9L633 689.7M619.9 675.4L622.5 674M611.7 658.3L615.4 656.7M605.3 640.5L608.2 639.6M600.7 622.4L604.6 621.6M597.9 604L600.9 603.7M597 585.4L601 585.4M597.9 566.8L600.9 567.1M600.7 548.4L604.6 549.2M605.3 530.3L608.2 531.2M611.7 512.5L615.4 514.1M619.9 495.4L622.5 496.8M629.7 478.9L633 481.1M641.1 463.2L643.5 465.1M654.1 448.5L657 451.3M668.5 434.8L670.4 437M684.2 422.2L686.5 425.5M701 410.9L702.6 413.5M719 400.9L720.8 404.5M737.9 392.4L739 395.1M757.5 385.2L758.8 389.1M777.8 379.7L778.5 382.6M798.6 375.6L799.2 379.6M819.7 373.2L820 376.2" stroke="#202020" stroke-width="1" fill="none"/><g font-size="5.6" fill="#101010" stroke="#101010" stroke-width="0.15" text-anchor="middle"><text x="884.4" y="369.6">10</text><text x="926.4" y="379.5">20</text><text x="965.9" y="395.5">30</text><text x="1001.7" y="417.4">40</text><text x="1032.6" y="444.4">50</text><text x="1057.7" y="475.7">60</text><text x="1076.3" y="510.4">70</text><text x="1087.7" y="547.5">80</text><text x="1091.5" y="585.8">E</text><text x="1087.7" y="624.1">100</text><text x="1076.3" y="661.2">110</text><text x="1057.7" y="695.9">120</text><text x="1032.6" y="727.2">130</text><text x="1001.7" y="754.2">140</text><text x="965.9" y="776.1">150</text><text x="926.4" y="792.1">160</text><text x="884.4" y="802">170</text><text x="841" y="805.3">S</text><text x="797.6" y="802">190</text><text x="755.6" y="792.1">200</text><text x="716.1" y="776.1">210</text><text x="680.3" y="754.2">220</text><text x="649.4" y="727.2">230</text><text x="624.3" y="695.9">240</text><text x="605.7" y="661.2">250</text><text x="594.3" y="624.1">260</text><text x="590.5" y="585.8">W</text><text x="594.3" y="547.5">280</text><text x="605.7" y="510.4">290</text><text x="624.3" y="475.7">300</text><text x="649.4" y="444.4">310</text><text x="680.3" y="417.4">320</text><text x="716.1" y="395.5">330</text><text x="755.6" y="379.5">340</text><text x="797.6" y="369.6">350</text></g><line x1="841" y1="378" x2="841" y2="479" stroke="#e00000" stroke-width="1.1" stroke-dasharray="3,2"/><path d="M836 366 L846 366 L841 374 Z" fill="#8020d0"/><path d="M837.5 378 L844.5 378 L841 371 Z" fill="#000"/><path d="M1085 585.5 L1092 578 L1092 593 Z" fill="#1830f0" stroke="#807868" stroke-width="0.6"/><rect x="1089" y="582" width="5" height="5" fill="#1830f0"/><path d="M872 801.5 L877.5 797.5 L880 796 L883 796.5 L884.5 798 L887 798.5 L883.5 800 L884 804.5 L880.5 805.5 L878.5 801.5 Z" fill="#f060f0" stroke="#707060" stroke-width="0.6"/><path d="M827.5 546.5 Q831 537 836 533 L846 533 Q851 537 854.5 546.5 L854.5 635 L852.5 637 L829.5 637 L827.5 635 Z" fill="none" stroke="#202020" stroke-width="1.1"/><circle cx="841.3" cy="585.2" r="6" fill="none" stroke="#8020c0" stroke-width="1.3"/><path d="M833 585.2 H849.6 M841.3 577 V593.4" stroke="#8020c0" stroke-width="1.2"/><circle cx="841.3" cy="585.2" r="2" fill="none" stroke="#8020c0" stroke-width="0.8"/><path d="M743.5 547 h6 M746.5 544 v6" stroke="#405080" stroke-width="1"/><text x="750.5" y="548" font-size="5.5" fill="#405080">FBeam-1T1</text><path d="M745.5 564 h6 M748.5 561 v6" stroke="#405080" stroke-width="1"/><text x="752.5" y="565" font-size="5.5" fill="#405080">FBeam-1T2</text><path d="M747.5 581 h6 M750.5 578 v6" stroke="#405080" stroke-width="1"/><text x="754.5" y="582" font-size="5.5" fill="#405080">FBeam-1T3</text><path d="M748.5 598 h6 M751.5 595 v6" stroke="#405080" stroke-width="1"/><text x="755.5" y="599" font-size="5.5" fill="#405080">FBeam-1T4</text><rect x="1007.5" y="365.5" width="41" height="17" fill="#e9e5d5" stroke="#fff"/><path d="M1048.5 365.5 V382.5 H1007.5" fill="none" stroke="#a8a498"/><path d="M1014 370 L1028 379 L1042 370" fill="none" stroke="#ccc8b8" stroke-width="3"/><rect x="1049.5" y="365.5" width="41" height="17" fill="#e9e5d5" stroke="#fff"/><path d="M1090.5 365.5 V382.5 H1049.5" fill="none" stroke="#a8a498"/><path d="M1056 379 L1070 370 L1084 379" fill="none" stroke="#ccc8b8" stroke-width="3"/><text x="990.5" y="398.5" font-size="10.5" fill="#a09c90" textLength="29.5" lengthAdjust="spacingAndGlyphs" >Range:</text><rect x="1024.5" y="388.5" width="64" height="12" fill="#faf3e2" stroke="#98b0cc"/><text x="1056.5" y="399.3" font-size="12.8" fill="#201818" textLength="30.5" lengthAdjust="spacingAndGlyphs" >150.0</text><text x="1019" y="417.5" font-size="10.5" fill="#a09c90" textLength="19.5" lengthAdjust="spacingAndGlyphs" >Grid:</text><rect x="1041.5" y="407.5" width="47" height="12" fill="#faf3e2" stroke="#98b0cc"/><text x="1063" y="418.5" font-size="12.8" fill="#201818" textLength="24" lengthAdjust="spacingAndGlyphs" >50.0</text><text x="1075" y="431" font-size="10.5" fill="#a09c90" textLength="14" lengthAdjust="spacingAndGlyphs" >[m]</text><rect x="1048.5" y="434.5" width="42" height="18" fill="#ece9d8" stroke="#fff"/><path d="M1090.5 434.5 V452.5 H1048.5" fill="none" stroke="#a8a498"/><path d="M1052 450 L1059 438 L1066 450 M1055 444 L1066 444 M1059 435 V440" fill="none" stroke="#505050" stroke-width="1"/><rect x="1064.5" y="446.5" width="21" height="3" fill="#e8e8e8" stroke="#808080"/><text x="1066" y="444" font-size="10" fill="#505050">EBL</text><text x="595.5" y="750" font-size="10" fill="#e070e0" textLength="26.5" lengthAdjust="spacingAndGlyphs" >WIND</text><rect x="595.5" y="760.5" width="50" height="11" fill="#faf3e2" stroke="#98b0cc"/><text x="609.5" y="770.6" font-size="11.5" fill="#201818" textLength="30.5" lengthAdjust="spacingAndGlyphs" >170.9</text><text x="649" y="767" font-size="8" fill="#807868">°</text><rect x="595.5" y="776.5" width="50" height="11" fill="#faf3e2" stroke="#98b0cc"/><text x="623" y="786.6" font-size="11.5" fill="#201818" textLength="17" lengthAdjust="spacingAndGlyphs" >0.0</text><text x="648" y="785" font-size="9.5" fill="#807868" textLength="16" lengthAdjust="spacingAndGlyphs" >m/s</text><rect x="595.5" y="794.5" width="111" height="7" fill="none" stroke="#98b0cc"/><text x="1037.5" y="750" font-size="10" fill="#3030e0" textLength="45.5" lengthAdjust="spacingAndGlyphs" >CURRENT</text><rect x="1036.5" y="760.5" width="50" height="11" fill="#faf3e2" stroke="#98b0cc"/><text x="1049.5" y="770.6" font-size="11.5" fill="#201818" textLength="31.5" lengthAdjust="spacingAndGlyphs" >090.0</text><text x="1029" y="767" font-size="8" fill="#807868">°</text><rect x="1036.5" y="776.5" width="50" height="11" fill="#faf3e2" stroke="#98b0cc"/><text x="1064" y="786.6" font-size="11.5" fill="#201818" textLength="17" lengthAdjust="spacingAndGlyphs" >0.0</text><text x="1017" y="785" font-size="9.5" fill="#807868" textLength="16" lengthAdjust="spacingAndGlyphs" >m/s</text><rect x="975.5" y="794.5" width="111" height="7" fill="none" stroke="#98b0cc"/><rect x="78" y="809" width="1018" height="33" fill="#ece9d8"/><rect x="78" y="809" width="1018" height="2" fill="#b0ac9c"/><text x="79.5" y="830.7" font-size="10.8" fill="#000" textLength="31" lengthAdjust="spacingAndGlyphs" >Ready</text><line x1="511.5" y1="812" x2="511.5" y2="840" stroke="#c8c4b4"/><line x1="512.5" y1="812" x2="512.5" y2="840" stroke="#fff"/><rect x="516.5" y="813.5" width="103" height="12.5" fill="#ece9d8" stroke="#fff"/><path d="M516.5 826 V813.5 H619.5" fill="none" stroke="#a8a498"/><text x="540" y="824" font-size="11" fill="#000" textLength="56.5" lengthAdjust="spacingAndGlyphs" font-weight="bold">AUTO POS</text><rect x="541" y="827" width="52.5" height="12" fill="#ebe8dc"/><text x="543" y="837.3" font-size="11" fill="#b8b4a8" textLength="48.5" lengthAdjust="spacingAndGlyphs" >MainMode</text><rect x="626.5" y="813.5" width="63.5" height="12.5" fill="#ece9d8" stroke="#fff"/><path d="M626.5 826 V813.5 H690.0" fill="none" stroke="#a8a498"/><text x="635.5" y="824" font-size="11" fill="#000" textLength="44" lengthAdjust="spacingAndGlyphs" >PRESENT</text><rect x="634" y="827" width="46.5" height="12" fill="#ebe8dc"/><text x="636" y="837.3" font-size="11" fill="#b8b4a8" textLength="42.5" lengthAdjust="spacingAndGlyphs" >PosMode</text><rect x="696.5" y="813.5" width="63.5" height="12.5" fill="#ece9d8" stroke="#fff"/><path d="M696.5 826 V813.5 H760.0" fill="none" stroke="#a8a498"/><text x="705" y="824" font-size="11" fill="#000" textLength="44" lengthAdjust="spacingAndGlyphs" >PRESENT</text><rect x="702.5" y="827" width="48.5" height="12" fill="#ebe8dc"/><text x="704.5" y="837.3" font-size="11" fill="#b8b4a8" textLength="44.5" lengthAdjust="spacingAndGlyphs" >HdgMode</text><rect x="766.5" y="813.5" width="63.5" height="12.5" fill="#ece9d8" stroke="#fff"/><path d="M766.5 826 V813.5 H830.0" fill="none" stroke="#a8a498"/><text x="773.8" y="824" font-size="11" fill="#000" textLength="47.2" lengthAdjust="spacingAndGlyphs" >VARIABLE</text><rect x="771.8" y="827" width="51.90000000000009" height="12" fill="#ebe8dc"/><text x="773.8" y="837.3" font-size="11" fill="#b8b4a8" textLength="47.9" lengthAdjust="spacingAndGlyphs" >AllocMode</text><rect x="836.5" y="813.5" width="65.5" height="12.5" fill="#ece9d8" stroke="#fff"/><path d="M836.5 826 V813.5 H902.0" fill="none" stroke="#a8a498"/><text x="848" y="824" font-size="11" fill="#000" textLength="40.5" lengthAdjust="spacingAndGlyphs" >Midships</text><rect x="841" y="827" width="54" height="12" fill="#ebe8dc"/><text x="843" y="837.3" font-size="11" fill="#b8b4a8" textLength="50" lengthAdjust="spacingAndGlyphs" >RotCenter</text><rect x="923.0" y="813.5" width="20.0" height="12.5" fill="#ece9d8" stroke="#fff"/><path d="M923.0 826 V813.5 H943.0" fill="none" stroke="#a8a498"/><circle cx="933" cy="820" r="6.5" fill="#008000"/><text x="921" y="837.3" font-size="11" fill="#b8b4a8" textLength="22.5" lengthAdjust="spacingAndGlyphs" >Refs</text><rect x="961.5" y="813.5" width="19.5" height="12.5" fill="#ece9d8" stroke="#fff"/><path d="M961.5 826 V813.5 H981.0" fill="none" stroke="#a8a498"/><rect x="983.5" y="813.5" width="19.5" height="12.5" fill="#ece9d8" stroke="#fff"/><path d="M983.5 826 V813.5 H1003.0" fill="none" stroke="#a8a498"/><path d="M962 815 h4 M962 815 v10 M962 819 h4 M962 825 h4" stroke="#202020" fill="none"/><rect x="968" y="819" width="12" height="6" fill="#606060"/><path d="M984 815 h4 M984 815 v10 M984 819 h4 M984 822 h4 M984 825 h4" stroke="#202020" fill="none"/><rect x="990" y="819" width="12" height="6" fill="#606060"/><text x="963" y="837.3" font-size="11" fill="#b8b4a8" textLength="38.5" lengthAdjust="spacingAndGlyphs" >Joystick</text><rect x="1021.5" y="813.5" width="19.5" height="12.5" fill="#ece9d8" stroke="#fff"/><path d="M1021.5 826 V813.5 H1041.0" fill="none" stroke="#a8a498"/><rect x="1043.5" y="813.5" width="19.5" height="12.5" fill="#ece9d8" stroke="#fff"/><path d="M1043.5 826 V813.5 H1063.0" fill="none" stroke="#a8a498"/><rect x="1065.5" y="813.5" width="19.5" height="12.5" fill="#ece9d8" stroke="#fff"/><path d="M1065.5 826 V813.5 H1085.0" fill="none" stroke="#a8a498"/><path d="M1031 814 v8 M1026 818 h10 M1026 824 h10" stroke="#303030" stroke-width="1.5" fill="none"/><path d="M1044 815 h4 M1044 815 v10 M1044 819 h4 M1044 822 h4 M1044 825 h4" stroke="#202020" fill="none"/><rect x="1050" y="822" width="12" height="3" fill="#606060"/><text x="1033" y="837.3" font-size="11" fill="#b8b4a8" textLength="39.5" lengthAdjust="spacingAndGlyphs" >AutoPos</text><rect x="0" y="847" width="1410" height="2" fill="#f4f4f4"/></svg><style>
.lbl{position:absolute;font-size:9.7px;line-height:10px;color:#000;background:#ece9d8;padding:0 1px}
.ind{width:41px;height:7px;border:1px solid #000;border-radius:2px 2px 0 0;background:#aca899}
.ind.y{background:#ffff00}
.btn{border:1px solid #000;border-radius:2px;background:#ece9d8;box-shadow:inset 1px 1px 0 #fff,inset -1px -1px 0 #c8c4b4;display:flex;align-items:center;justify-content:center;text-align:center;font-size:9.8px;line-height:11.3px;color:#000;padding-bottom:2px}
</style><div class="a" id="pw" style="left:104px;top:125px;width:559px;height:384px;border-radius:8px 8px 0 0;background:#7488dc;box-shadow:inset 1px 0 0 #5060d0,inset -1px 0 0 #4a58c8,inset 0 -1px 0 #4a58c8"></div><div class="a" style="left:104px;top:125px;width:559px;height:30px;border-radius:8px 8px 0 0;background:linear-gradient(#a8c0f0 0,#90aaee 2px,#7e9ae2 6px,#7b97e0 12px,#86a2e8 22px,#8aa6ec 27px,#7890dc 30px)"></div><div class="a" style="left:104px;top:125px;width:559px;height:30px;border-radius:8px 8px 0 0;background:linear-gradient(90deg,rgba(110,130,215,0.5) 0,rgba(0,0,0,0) 30px,rgba(0,0,0,0) 520px,rgba(110,130,215,0.6) 100%)"></div><div class="a" style="left:108px;top:155px;width:551px;height:350px;background:#ece9d8;overflow:hidden" id="pc"></div><svg class="a" style="left:110px;top:134px" width="15" height="14"><rect x="0" y="0" width="15" height="14" fill="#202020"/><rect x="1" y="1" width="13" height="12" fill="#7a7a7a"/><rect x="2" y="2" width="3" height="1.5" fill="#e0d040"/><rect x="6" y="2" width="3" height="1.5" fill="#e0d040"/><rect x="10" y="2" width="3" height="1.5" fill="#e0d040"/><circle cx="5" cy="9" r="2.5" fill="#e8e8e8"/><rect x="9" y="6" width="4" height="6" fill="#e8e8e8"/></svg><span class="a" style="left:130px;top:134.5px;font-size:13.2px;color:#dbe5f8;letter-spacing:0.1px;-webkit-text-stroke:0.25px #dbe5f8">Screen Operator Panel - DPPAN</span><div class="a" style="left:591px;top:132px;width:19px;height:19px;border:1px solid #b8c8f4;border-radius:3px;background:linear-gradient(135deg,#a0b4f0,#6c88e4 60%,#5a78dc)"></div><div class="a" style="left:596px;top:144px;width:7px;height:3px;background:#fff"></div><div class="a" style="left:614px;top:132px;width:19px;height:19px;border:1px solid #b8c8f4;border-radius:3px;background:linear-gradient(135deg,#a0b4f0,#6c88e4 60%,#5a78dc)"></div><div class="a" style="left:618px;top:136px;width:11px;height:11px;border:1px solid #fff;border-top-width:3px"></div><div class="a" style="left:637px;top:132px;width:19px;height:19px;border:1px solid #b8c8f4;border-radius:3px;background:linear-gradient(135deg,#c8a0b0,#b87880)"></div><svg class="a" style="left:640px;top:135px" width="13" height="13"><path d="M2 2 L11 11 M11 2 L2 11" stroke="#fff" stroke-width="2"/></svg><div class="a" style="left:108px;top:155px;width:551px;height:350px;overflow:hidden"><div class="a" style="left:105px;top:8px;width:487px;height:50px;border-top:2px solid #aca899;border-left:2px solid #aca899;border-bottom:2px solid #fff;border-right:2px solid #fff"></div><span class="a lbl" style="left:363px;top:3px">MODES</span><div class="a ind" style="left:113px;top:15px"></div><div class="a btn" style="left:112px;top:22px;width:43px;height:29px"><span>Standby</span></div><div class="a ind" style="left:158px;top:15px"></div><div class="a btn" style="left:157px;top:22px;width:43px;height:29px"><span>Joystick</span></div><div class="a ind y" style="left:203px;top:15px"></div><div class="a btn" style="left:202px;top:22px;width:43px;height:29px"><span>Auto</span></div><div class="a ind" style="left:248px;top:15px"></div><div class="a btn" style="left:247px;top:22px;width:43px;height:29px"><span>Auto<br>Pilot</span></div><div class="a ind" style="left:293px;top:15px"></div><div class="a btn" style="left:292px;top:22px;width:43px;height:29px"><span>Follow<br>Target</span></div><div class="a ind" style="left:338px;top:15px"></div><div class="a btn" style="left:337px;top:22px;width:43px;height:29px"><span></span></div><div class="a ind" style="left:383px;top:15px"></div><div class="a btn" style="left:382px;top:22px;width:43px;height:29px"><span></span></div><div class="a ind" style="left:428px;top:15px"></div><div class="a btn" style="left:427px;top:22px;width:43px;height:29px"><span></span></div><div class="a ind" style="left:473px;top:15px"></div><div class="a btn" style="left:472px;top:22px;width:43px;height:29px"><span></span></div><div class="a ind y" style="left:518px;top:15px"></div><div class="a btn" style="left:517px;top:22px;width:43px;height:29px"><span>Auto<br>Surge</span></div><div class="a" style="left:105px;top:93px;width:147px;height:175px;border-top:2px solid #aca899;border-left:2px solid #aca899;border-bottom:2px solid #fff;border-right:2px solid #fff"></div><span class="a lbl" style="left:152px;top:87px">CONTROLS</span><div class="a ind" style="left:113px;top:99px"></div><div class="a btn" style="left:112px;top:106px;width:43px;height:29px"><span>Change<br>Position</span></div><div class="a ind y" style="left:158px;top:99px"></div><div class="a btn" style="left:157px;top:106px;width:43px;height:29px"><span>Present<br>Pos</span></div><div class="a ind" style="left:203px;top:99px"></div><div class="a btn" style="left:202px;top:106px;width:43px;height:29px"><span>Control<br>Setup</span></div><div class="a ind" style="left:113px;top:141px"></div><div class="a btn" style="left:112px;top:148px;width:43px;height:29px"><span>Change<br>Heading</span></div><div class="a ind y" style="left:158px;top:141px"></div><div class="a btn" style="left:157px;top:148px;width:43px;height:29px"><span>Present<br>Heading</span></div><div class="a ind" style="left:203px;top:141px"></div><div class="a btn" style="left:202px;top:148px;width:43px;height:29px"><span>Joystick<br>Setup</span></div><div class="a ind" style="left:113px;top:183px"></div><div class="a btn" style="left:112px;top:190px;width:43px;height:29px"><span></span></div><div class="a ind" style="left:158px;top:183px"></div><div class="a btn" style="left:157px;top:190px;width:43px;height:29px"><span></span></div><div class="a ind" style="left:203px;top:183px"></div><div class="a btn" style="left:202px;top:190px;width:43px;height:29px"><span>Joy Full<br>Thrust</span></div><div class="a ind" style="left:113px;top:225px"></div><div class="a btn" style="left:112px;top:232px;width:43px;height:29px"><span></span></div><div class="a ind" style="left:158px;top:225px"></div><div class="a btn" style="left:157px;top:232px;width:43px;height:29px"><span></span></div><div class="a ind" style="left:203px;top:225px"></div><div class="a btn" style="left:202px;top:232px;width:43px;height:29px"><span></span></div><div class="a" style="left:330px;top:93px;width:102px;height:175px;border-top:2px solid #aca899;border-left:2px solid #aca899;border-bottom:2px solid #fff;border-right:2px solid #fff"></div><span class="a lbl" style="left:364.5px;top:87px">VIEWS</span><div class="a btn" style="left:337px;top:106px;width:43px;height:29px"><span>Refsys</span></div><div class="a btn" style="left:382px;top:106px;width:43px;height:29px"><span>Sensor</span></div><div class="a btn" style="left:337px;top:148px;width:43px;height:29px"><span>Power</span></div><div class="a btn" style="left:382px;top:148px;width:43px;height:29px"><span>Joystick</span></div><div class="a btn" style="left:337px;top:190px;width:43px;height:29px"><span>Position</span></div><div class="a btn" style="left:382px;top:190px;width:43px;height:29px"><span>Thrusters</span></div><div class="a btn" style="left:337px;top:232px;width:43px;height:29px"><span></span></div><div class="a btn" style="left:382px;top:232px;width:43px;height:29px"><span>Hard<br>Copy</span></div><div class="a" style="left:510px;top:93px;width:142px;height:175px;border-top:2px solid #aca899;border-left:2px solid #aca899;border-bottom:2px solid #fff;border-right:2px solid #fff"></div><div class="a ind y" style="left:518px;top:99px"></div><div class="a btn" style="left:517px;top:106px;width:43px;height:29px"><span>Azimuth<br>S</span></div><div class="a ind" style="left:518px;top:141px"></div><div class="a btn" style="left:517px;top:148px;width:43px;height:29px"><span></span></div><div class="a ind" style="left:518px;top:183px"></div><div class="a btn" style="left:517px;top:190px;width:43px;height:29px"><span></span></div><div class="a ind" style="left:518px;top:225px"></div><div class="a btn" style="left:517px;top:232px;width:43px;height:29px"><span></span></div><div class="a" style="left:105px;top:303px;width:487px;height:62px;border-top:2px solid #aca899;border-left:2px solid #aca899;border-bottom:2px solid #fff;border-right:2px solid #fff"></div><span class="a lbl" style="left:357px;top:297px">SENSORS</span><div class="a ind y" style="left:113px;top:309px"></div><div class="a btn" style="left:112px;top:316px;width:43px;height:29px"><span>GPS1</span></div><div class="a ind y" style="left:158px;top:309px"></div><div class="a btn" style="left:157px;top:316px;width:43px;height:29px"><span>GPS2</span></div><div class="a ind y" style="left:203px;top:309px"></div><div class="a btn" style="left:202px;top:316px;width:43px;height:29px"><span>Fanbeam</span></div><div class="a ind" style="left:248px;top:309px"></div><div class="a btn" style="left:247px;top:316px;width:43px;height:29px"><span></span></div><div class="a ind" style="left:293px;top:309px"></div><div class="a btn" style="left:292px;top:316px;width:43px;height:29px"><span></span></div><div class="a ind" style="left:338px;top:309px"></div><div class="a btn" style="left:337px;top:316px;width:43px;height:29px"><span></span></div><div class="a ind" style="left:383px;top:309px"></div><div class="a btn" style="left:382px;top:316px;width:43px;height:29px"><span></span></div><div class="a ind" style="left:428px;top:309px"></div><div class="a btn" style="left:427px;top:316px;width:43px;height:29px"><span></span></div><div class="a ind" style="left:473px;top:309px"></div><div class="a btn" style="left:472px;top:316px;width:43px;height:29px"><span></span></div><div class="a ind y" style="left:518px;top:309px"></div><div class="a btn" style="left:517px;top:316px;width:43px;height:29px"><span>Gyro</span></div><div class="a btn" style="left:5px;top:190px;width:30px;height:19px"><span>Dec</span></div><div class="a btn" style="left:35px;top:190px;width:30px;height:19px"><span>Act</span></div><div class="a btn" style="left:65px;top:190px;width:30px;height:19px"><span>Inc</span></div><div class="a btn" style="left:38px;top:219px;width:27px;height:11px"><span>^</span></div><div class="a btn" style="left:35px;top:310px;width:30px;height:11px"><span>v</span></div><div class="a btn" style="left:0px;top:255px;width:10px;height:30px"><span>&lt;</span></div><div class="a btn" style="left:90px;top:255px;width:11px;height:30px"><span>&gt;</span></div><svg class="a" style="left:16px;top:236px" width="70" height="70"><defs><linearGradient id="kg" x1="0" y1="0" x2="1" y2="1"><stop offset="0" stop-color="#cdc9b9"/><stop offset="0.44" stop-color="#cdc9b9"/><stop offset="0.5" stop-color="#f8f8f4"/><stop offset="0.56" stop-color="#cdc9b9"/><stop offset="1" stop-color="#cdc9b9"/></linearGradient></defs><ellipse cx="34" cy="34.6" rx="33.5" ry="33.5" fill="#aca899" stroke="#000" stroke-width="1"/><circle cx="34" cy="34" r="22.5" fill="url(#kg)" stroke="#000" stroke-width="1"/><circle cx="34" cy="6.7" r="3.6" fill="#000"/></svg></div></body></html>
